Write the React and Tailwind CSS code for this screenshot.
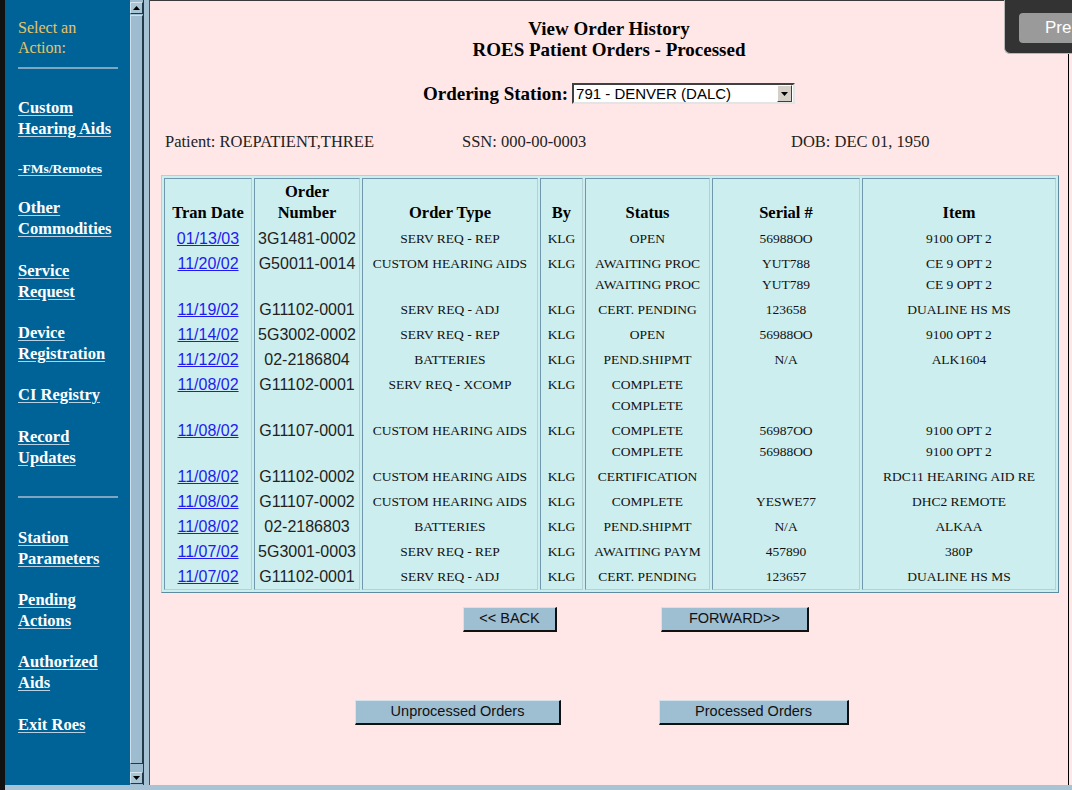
import React from 'react'

const SERIF = "font-['Liberation_Serif','Times_New_Roman',serif]"
const SANS = "font-['Liberation_Sans',Arial,sans-serif]"

const rows = [
  { date: '01/13/03', num: '3G1481-0002', type: 'SERV REQ - REP', status: ['OPEN'], serial: ['56988OO'], item: ['9100 OPT 2'] },
  { date: '11/20/02', num: 'G50011-0014', type: 'CUSTOM HEARING AIDS', status: ['AWAITING PROC', 'AWAITING PROC'], serial: ['YUT788', 'YUT789'], item: ['CE 9 OPT 2', 'CE 9 OPT 2'] },
  { date: '11/19/02', num: 'G11102-0001', type: 'SERV REQ - ADJ', status: ['CERT. PENDING'], serial: ['123658'], item: ['DUALINE HS MS'] },
  { date: '11/14/02', num: '5G3002-0002', type: 'SERV REQ - REP', status: ['OPEN'], serial: ['56988OO'], item: ['9100 OPT 2'] },
  { date: '11/12/02', num: '02-2186804', type: 'BATTERIES', status: ['PEND.SHIPMT'], serial: ['N/A'], item: ['ALK1604'] },
  { date: '11/08/02', num: 'G11102-0001', type: 'SERV REQ - XCOMP', status: ['COMPLETE', 'COMPLETE'], serial: [], item: [] },
  { date: '11/08/02', num: 'G11107-0001', type: 'CUSTOM HEARING AIDS', status: ['COMPLETE', 'COMPLETE'], serial: ['56987OO', '56988OO'], item: ['9100 OPT 2', '9100 OPT 2'] },
  { date: '11/08/02', num: 'G11102-0002', type: 'CUSTOM HEARING AIDS', status: ['CERTIFICATION'], serial: [], item: ['RDC11 HEARING AID RE'] },
  { date: '11/08/02', num: 'G11107-0002', type: 'CUSTOM HEARING AIDS', status: ['COMPLETE'], serial: ['YESWE77'], item: ['DHC2 REMOTE'] },
  { date: '11/08/02', num: '02-2186803', type: 'BATTERIES', status: ['PEND.SHIPMT'], serial: ['N/A'], item: ['ALKAA'] },
  { date: '11/07/02', num: '5G3001-0003', type: 'SERV REQ - REP', status: ['AWAITING PAYM'], serial: ['457890'], item: ['380P'] },
  { date: '11/07/02', num: 'G11102-0001', type: 'SERV REQ - ADJ', status: ['CERT. PENDING'], serial: ['123657'], item: ['DUALINE HS MS'] },
]

const headers = [['Tran Date'], ['Order', 'Number'], ['Order Type'], ['By'], ['Status'], ['Serial #'], ['Item']]

function SideLink({ lines, small, className = '' }) {
  return (
    <div className={`leading-[21px] ${className}`}>
      <a
        href="#"
        className={`font-bold text-white underline decoration-[#b8d0e2] underline-offset-[2px] ${
          small ? 'text-[13.5px]' : 'text-[16.5px]'
        }`}
      >
        {lines.map((l, i) => (
          <React.Fragment key={i}>
            {i > 0 && <br />}
            {l}
          </React.Fragment>
        ))}
      </a>
    </div>
  )
}

function Sidebar() {
  return (
    <div className={`w-[125px] bg-[#006398] pl-[13px] pt-[18px] ${SERIF}`}>
      <div className="text-[16px] leading-[20px] text-[#e6c46a]">
        Select an
        <br />
        Action:
      </div>
      <div className="mt-[9px] h-[2px] w-[100px] bg-[#7fa6c0]" />
      <SideLink lines={['Custom', 'Hearing Aids']} className="mt-[28px]" />
      <SideLink lines={['-FMs/Remotes']} small className="mt-[18px]" />
      <SideLink lines={['Other', 'Commodities']} className="mt-[18px]" />
      <SideLink lines={['Service', 'Request']} className="mt-[21px]" />
      <SideLink lines={['Device', 'Registration']} className="mt-[20px]" />
      <SideLink lines={['CI Registry']} className="mt-[20px]" />
      <SideLink lines={['Record', 'Updates']} className="mt-[21px]" />
      <div className="mt-[28px] h-[2px] w-[100px] bg-[#7fa6c0]" />
      <SideLink lines={['Station', 'Parameters']} className="mt-[29px]" />
      <SideLink lines={['Pending', 'Actions']} className="mt-[20px]" />
      <SideLink lines={['Authorized', 'Aids']} className="mt-[20px]" />
      <SideLink lines={['Exit Roes']} className="mt-[21px]" />
    </div>
  )
}

function ScrollButton({ up }) {
  return (
    <div className="flex h-[12px] items-center justify-center border border-t-[#d6e6ef] border-l-[#d6e6ef] border-b-[#203848] border-r-[#203848] bg-[#a9c6d7]">
      <svg width="7" height="4" viewBox="0 0 7 4">
        {up ? <polygon points="3.5,0 7,4 0,4" fill="#000" /> : <polygon points="0,0 7,0 3.5,4" fill="#000" />}
      </svg>
    </div>
  )
}

function Scrollbar() {
  return (
    <div className="flex w-[14px] flex-col border-r border-[#23394a] bg-[#9dbcd0] pt-[2px] pb-[1px]">
      <ScrollButton up />
      <div className="mt-[1px] flex-1 border border-t-[#cfe0ea] border-l-[#cfe0ea] border-b-[#23394a] border-r-[#23394a] bg-[#9dbcd0]" />
      <div className="h-[8px]" />
      <ScrollButton />
    </div>
  )
}

function Btn({ children, w }) {
  return (
    <button
      className={`h-[25px] border border-t-[#d2e2ec] border-l-[#d2e2ec] border-b-[#111] border-r-[#111] border-b-2 border-r-2 bg-[#9ebed2] text-[14.5px] text-[#111] ${SANS} ${w}`}
    >
      {children}
    </button>
  )
}

function OrdersTable() {
  const cell = 'border-l border-r border-l-[#6f98ac] border-r-[#b3d0db] bg-[#cdeeee] text-center'
  return (
    <div className="ml-[11px] w-[898px] border border-t-[#b3d0db] border-l-[#b3d0db] border-b-[#5d8ba0] border-r-[#5d8ba0] bg-[#cdeeee] p-[2px]">
      <div className="grid grid-cols-[88px_106px_176px_43px_125px_148px_194px] gap-x-[2px]">
        {headers.map((h, i) => (
          <div
            key={i}
            className={`${cell} flex flex-col justify-end border-t border-t-[#6f98ac] pt-[2px] pb-[3px] text-[16.5px] font-bold leading-[21px] text-black ${SERIF}`}
          >
            {h.map((l) => (
              <div key={l}>{l}</div>
            ))}
          </div>
        ))}
        {rows.map((r, i) => {
          const last = i === rows.length - 1 ? 'border-b border-b-[#b3d0db]' : ''
          const pad = `${cell} ${last} py-[2px] leading-[21px]`
          const small = `${pad} text-[13.5px] text-[#111] ${SERIF}`
          return (
            <React.Fragment key={i}>
              <div className={`${pad} text-[16px] ${SANS}`}>
                <a href="#" className="text-[#1c1cf0] underline">
                  {r.date}
                </a>
              </div>
              <div className={`${pad} text-[16px] text-[#222] ${SANS}`}>{r.num}</div>
              <div className={small}>{r.type}</div>
              <div className={small}>KLG</div>
              <div className={small}>
                {r.status.map((s, j) => (
                  <div key={j}>{s}</div>
                ))}
              </div>
              <div className={small}>
                {r.serial.map((s, j) => (
                  <div key={j}>{s}</div>
                ))}
              </div>
              <div className={small}>
                {r.item.map((s, j) => (
                  <div key={j}>{s}</div>
                ))}
              </div>
            </React.Fragment>
          )
        })}
      </div>
    </div>
  )
}

function Main() {
  return (
    <div className={`w-[919px] border-r border-t border-r-black border-t-[#3a3a3a] bg-[#ffe7e7] ${SERIF}`}>
      <div className="pt-[17px] text-center text-[19px] font-bold leading-[21px] text-black">
        <div>View Order History</div>
        <div>ROES Patient Orders - Processed</div>
      </div>

      <div className="mt-[23px] flex items-center justify-center gap-[4px]">
        <span className="text-[19px] font-bold leading-[21px] text-black">Ordering Station:</span>
        <div className="flex h-[21px] w-[223px] items-center border-2 border-t-[#404040] border-l-[#404040] border-b-[#e4e4e4] border-r-[#e4e4e4] bg-white">
          <span className={`flex-1 pl-[2px] text-[15px] leading-[17px] text-black ${SANS}`}>791 - DENVER (DALC)</span>
          <div className="mr-[1px] flex h-[17px] w-[15px] items-center justify-center border border-t-[#fff] border-l-[#fff] border-b-[#404040] border-r-[#404040] bg-[#d4d0c8]">
            <svg width="7" height="4" viewBox="0 0 7 4">
              <polygon points="0,0 7,0 3.5,4" fill="#000" />
            </svg>
          </div>
        </div>
      </div>

      <div className="mt-[27px] flex pl-[15px] text-[16.5px] leading-[21px] text-[#222]">
        <span className="w-[297px]">Patient: ROEPATIENT,THREE</span>
        <span className="w-[329px]">SSN: 000-00-0003</span>
        <span>DOB: DEC 01, 1950</span>
      </div>

      <div className="mt-[23px]">
        <OrdersTable />
      </div>

      <div className="mt-[14px] flex pl-[313px]">
        <Btn w="w-[94px]">&lt;&lt; BACK</Btn>
        <div className="w-[104px]" />
        <Btn w="w-[148px]">FORWARD&gt;&gt;</Btn>
      </div>

      <div className="mt-[68px] flex pl-[205px]">
        <Btn w="w-[206px]">Unprocessed Orders</Btn>
        <div className="w-[98px]" />
        <Btn w="w-[190px]">Processed Orders</Btn>
      </div>
    </div>
  )
}

export default function App() {
  return (
    <div className="relative flex h-[790px] w-[1072px] flex-col overflow-hidden bg-[#ffe7e7]">
      <div className="flex h-[785px]">
        <div className="w-[5px] bg-[#111]" />
        <Sidebar />
        <Scrollbar />
        <div className="w-[6px] border-r border-[#4a4a4a] bg-[#a4c2d3]" />
        <Main />
        <div className="flex-1" />
      </div>
      <div className="flex h-[5px]">
        <div className="w-[5px] bg-[#111]" />
        <div className="flex-1 bg-[#a8c4d4]" />
      </div>

      {/* floating toolbar clipped at the window edge */}
      <div className="absolute top-0 right-0 h-[54px] w-[68px] rounded-bl-[6px] border-b border-l border-[#b8b8b8] bg-[#333]">
        <div className={`absolute top-[13px] left-[14px] flex h-[30px] w-[80px] items-center rounded-[4px] bg-[#9a9a9a] pl-[26px] text-[17px] text-white ${SANS}`}>
          Pre
        </div>
      </div>
    </div>
  )
}
